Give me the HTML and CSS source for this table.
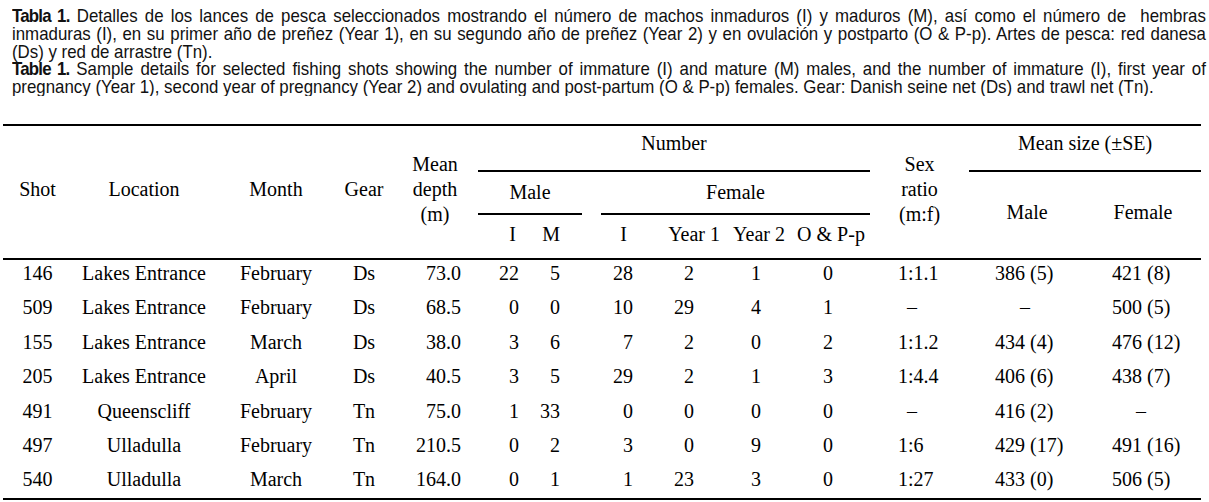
FILE: index.html
```html
<!DOCTYPE html>
<html lang="es">
<head>
<meta charset="utf-8">
<title>Tabla 1</title>
<link rel="stylesheet" href="styles.css">
</head>
<body>
<div class="caption-wrap">
  <div class="caption">
    <div class="line just"><b>Tabla 1.</b> Detalles de los lances de pesca seleccionados mostrando el número de machos inmaduros (I) y maduros (M), así como el número de&nbsp; hembras</div>
    <div class="line just">inmaduras (I), en su primer año de preñez (Year 1), en su segundo año de preñez (Year 2) y en ovulación y postparto (O &amp; P-p). Artes de pesca: red danesa</div>
    <div class="line">(Ds) y red de arrastre (Tn).</div>
    <div class="line just"><b>Table 1.</b> Sample details for selected fishing shots showing the number of immature (I) and mature (M) males, and the number of immature (I), first year of</div>
    <div class="line">pregnancy (Year 1), second year of pregnancy (Year 2) and ovulating and post-partum (O &amp; P-p) females. Gear: Danish seine net (Ds) and trawl net (Tn).</div>
  </div>
</div>
<table class="data">
  <colgroup>
    <col class="c-shot"><col class="c-loc"><col class="c-month"><col class="c-gear"><col class="c-depth">
    <col class="c-mi"><col class="c-mm"><col class="c-sp"><col class="c-fi"><col class="c-y1"><col class="c-y2"><col class="c-op">
    <col class="c-sex"><col class="c-ms"><col class="c-fs">
  </colgroup>
  <thead>
    <tr class="h1">
      <th rowspan="3" class="full">Shot</th>
      <th rowspan="3" class="full">Location</th>
      <th rowspan="3" class="full">Month</th>
      <th rowspan="3" class="full">Gear</th>
      <th rowspan="3" class="full stack">Mean<br>depth<br>(m)</th>
      <th colspan="7" class="rule top">Number</th>
      <th rowspan="3" class="full stack">Sex<br>ratio<br>(m:f)</th>
      <th colspan="2" class="rule top">Mean size (±SE)</th>
    </tr>
    <tr class="h2">
      <th colspan="2" class="rule">Male</th>
      <th rowspan="2"></th>
      <th colspan="4" class="rule">Female</th>
      <th rowspan="2" class="sz">Male</th>
      <th rowspan="2" class="sz">Female</th>
    </tr>
    <tr class="h3">
      <th class="r hmi">I</th>
      <th class="r hmm">M</th>
      <th class="r hfi">I</th>
      <th class="r hy1">Year 1</th>
      <th class="hy2">Year 2</th>
      <th class="hop">O &amp; P-p</th>
    </tr>
  </thead>
  <tbody>
    <tr><td>146</td><td>Lakes Entrance</td><td>February</td><td>Ds</td><td class="dep">73.0</td><td class="mi">22</td><td class="mm">5</td><td></td><td class="fi">28</td><td class="y1">2</td><td class="y2">1</td><td class="op">0</td><td class="sx">1:1.1</td><td class="ms">386 (5)</td><td class="fs">421 (8)</td></tr>
    <tr><td>509</td><td>Lakes Entrance</td><td>February</td><td>Ds</td><td class="dep">68.5</td><td class="mi">0</td><td class="mm">0</td><td></td><td class="fi">10</td><td class="y1">29</td><td class="y2">4</td><td class="op">1</td><td class="sx dash">–</td><td class="ms dash">–</td><td class="fs">500 (5)</td></tr>
    <tr><td>155</td><td>Lakes Entrance</td><td>March</td><td>Ds</td><td class="dep">38.0</td><td class="mi">3</td><td class="mm">6</td><td></td><td class="fi">7</td><td class="y1">2</td><td class="y2">0</td><td class="op">2</td><td class="sx">1:1.2</td><td class="ms">434 (4)</td><td class="fs">476 (12)</td></tr>
    <tr><td>205</td><td>Lakes Entrance</td><td>April</td><td>Ds</td><td class="dep">40.5</td><td class="mi">3</td><td class="mm">5</td><td></td><td class="fi">29</td><td class="y1">2</td><td class="y2">1</td><td class="op">3</td><td class="sx">1:4.4</td><td class="ms">406 (6)</td><td class="fs">438 (7)</td></tr>
    <tr><td>491</td><td>Queenscliff</td><td>February</td><td>Tn</td><td class="dep">75.0</td><td class="mi">1</td><td class="mm">33</td><td></td><td class="fi">0</td><td class="y1">0</td><td class="y2">0</td><td class="op">0</td><td class="sx dash">–</td><td class="ms">416 (2)</td><td class="fs dash">–</td></tr>
    <tr><td>497</td><td>Ulladulla</td><td>February</td><td>Tn</td><td class="dep">210.5</td><td class="mi">0</td><td class="mm">2</td><td></td><td class="fi">3</td><td class="y1">0</td><td class="y2">9</td><td class="op">0</td><td class="sx">1:6</td><td class="ms">429 (17)</td><td class="fs">491 (16)</td></tr>
    <tr><td>540</td><td>Ulladulla</td><td>March</td><td>Tn</td><td class="dep">164.0</td><td class="mi">0</td><td class="mm">1</td><td></td><td class="fi">1</td><td class="y1">23</td><td class="y2">3</td><td class="op">0</td><td class="sx">1:27</td><td class="ms">433 (0)</td><td class="fs">506 (5)</td></tr>
  </tbody>
</table>
</body>
</html>
```

FILE: styles.css
```css
html, body {
  margin: 0;
  padding: 0;
  background: #ffffff;
  color: #000000;
}

.caption-wrap {
  padding: 7px 0 0 12px;
  overflow: hidden;
}

/* Arial Narrow look: regular sans condensed horizontally */
.caption {
  width: 1346px;
  transform: scaleX(0.887);
  transform-origin: 0 0;
  font-family: "Liberation Sans", Arial, sans-serif;
  font-size: 19px;
  line-height: 17.75px;
  color: #111111;
}

.caption .line {
  white-space: nowrap;
}

.caption .just {
  text-align: justify;
  text-align-last: justify;
}

.caption b {
  font-weight: bold;
  letter-spacing: -0.9px;
}

.data {
  margin: 28px 0 0 3px;
  border-collapse: collapse;
  table-layout: fixed;
  width: 1198px;
  font-family: "Liberation Serif", "Times New Roman", serif;
  font-size: 20px;
  color: #000000;
  border-bottom: 2px solid #000;
}

.data thead {
  border-top: 2px solid #000;
  border-bottom: 2px solid #000;
}

.data th,
.data td {
  padding: 0;
  font-weight: normal;
  text-align: center;
  vertical-align: middle;
  white-space: nowrap;
}

.c-shot { width: 69px; }
.c-loc { width: 144px; }
.c-month { width: 120px; }
.c-gear { width: 56px; }
.c-depth { width: 86px; }
.c-mi { width: 52px; }
.c-mm { width: 52px; }
.c-sp { width: 19px; }
.c-fi { width: 49px; }
.c-y1 { width: 76px; }
.c-y2 { width: 66px; }
.c-op { width: 78px; }
.c-sex { width: 99px; }
.c-ms { width: 116px; }
.c-fs { width: 116px; }

.data .h1 { height: 46px; }
.data .h2 { height: 43px; }
.data .h3 { height: 45px; }

.data th.full { padding-bottom: 4px; }
.data th.top { padding-bottom: 8px; }
.data th.sz { padding-bottom: 4px; }
.data .h3 th { padding-bottom: 3px; }

.data .stack {
  line-height: 25px;
}

.data th.rule {
  border-bottom: 2px solid #000;
}

.data th.r { text-align: right; }
.data .hmi { padding-right: 14px; }
.data .hmm { padding-right: 22px; }
.data .hfi { padding-right: 23px; }
.data .hy1 { padding-right: 6px; }

.data tbody tr { height: 34.4px; }
.data tbody td { padding-bottom: 5px; }

.data td.dep { text-align: right; padding-right: 17px; }
.data td.mi { text-align: right; padding-right: 11px; }
.data td.mm { text-align: right; padding-right: 22px; }
.data td.fi { text-align: right; padding-right: 17px; }
.data td.y1 { text-align: right; padding-right: 32px; }
.data td.y2 { text-align: center; padding-right: 6px; }
.data td.op { text-align: center; padding-right: 6px; }
.data td.sx { text-align: left; padding-left: 28px; }
.data td.ms { text-align: left; padding-left: 26px; }
.data td.fs { text-align: left; padding-left: 27px; }
.data td.sx.dash { padding-left: 37px; }
.data td.ms.dash,
.data td.fs.dash { text-align: center; padding-left: 0; padding-right: 4px; }
```
